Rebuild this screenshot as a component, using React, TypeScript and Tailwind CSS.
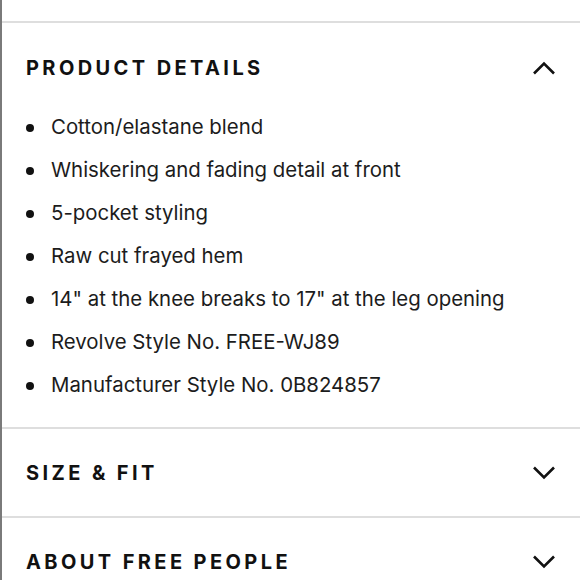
const items = [
  'Cotton/elastane blend',
  'Whiskering and fading detail at front',
  '5-pocket styling',
  'Raw cut frayed hem',
  '14" at the knee breaks to 17" at the leg opening',
  'Revolve Style No. FREE-WJ89',
  'Manufacturer Style No. 0B824857',
];

function Chevron({ up }: { up?: boolean }) {
  return (
    <svg width="24" height="14" viewBox="0 0 24 14" className="shrink-0">
      <path
        d={up ? 'M2 12.5 L12 2.5 L22 12.5' : 'M2 1.5 L12 11.5 L22 1.5'}
        fill="none"
        stroke="#111"
        strokeWidth="2.6"
      />
    </svg>
  );
}

function Header({ title, up }: { title: string; up?: boolean }) {
  return (
    <div className="flex items-center justify-between pl-[24px] pr-[24px]">
      <span className="text-[20px] leading-[24px] font-bold tracking-[3.4px] text-[#111]">
        {title}
      </span>
      <Chevron up={up} />
    </div>
  );
}

export default function App() {
  return (
    <div
      className="w-[580px] h-[580px] overflow-hidden bg-white border-l-2 border-[#7a7a7a] pt-[21px]"
      style={{ fontFamily: 'Inter, "Noto Sans", sans-serif' }}
    >
      <section className="border-t-2 border-[#dedede]">
        <div className="pt-[33px] pb-[26px]">
          <Header title="PRODUCT DETAILS" up />
        </div>
        <ul className="pb-[20px]">
          {items.map((t) => (
            <li key={t} className="flex items-center h-[43px] pl-[24px] text-[20.4px] text-[#1c1c1c]">
              <span className="w-[8px] h-[8px] rounded-full bg-[#111] mr-[17px] shrink-0" />
              {t}
            </li>
          ))}
        </ul>
      </section>
      <section className="border-t-2 border-[#dedede] pt-[32px] pb-[31px]">
        <Header title="SIZE & FIT" />
      </section>
      <section className="border-t-2 border-[#dedede] pt-[32px] pb-[31px]">
        <Header title="ABOUT FREE PEOPLE" />
      </section>
    </div>
  );
}
